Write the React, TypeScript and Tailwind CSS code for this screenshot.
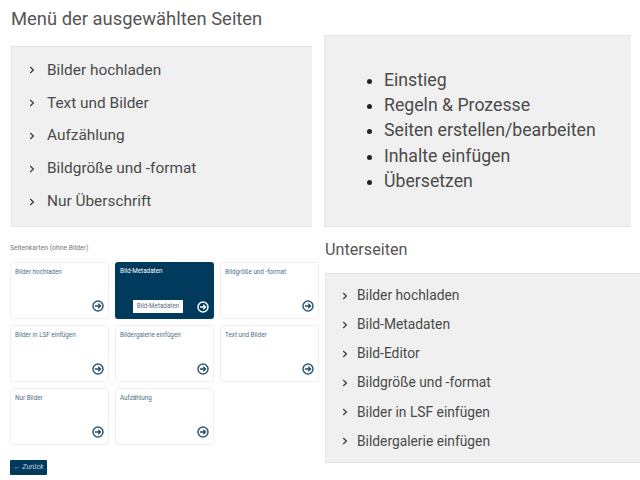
import React from 'react';

const selectedPages = ['Bilder hochladen', 'Text und Bilder', 'Aufzählung', 'Bildgröße und -format', 'Nur Überschrift'];
const topics = ['Einstieg', 'Regeln & Prozesse', 'Seiten erstellen/bearbeiten', 'Inhalte einfügen', 'Übersetzen'];
const subPages = ['Bilder hochladen', 'Bild-Metadaten', 'Bild-Editor', 'Bildgröße und -format', 'Bilder in LSF einfügen', 'Bildergalerie einfügen'];
const cards = ['Bilder hochladen', 'Bild-Metadaten', 'Bildgröße und -format', 'Bilder in LSF einfügen', 'Bildergalerie einfügen', 'Text und Bilder', 'Nur Bilder', 'Aufzählung'];

const Chevron = () => (
  <svg width="6" height="8" viewBox="0 0 6 8" fill="none" className="shrink-0">
    <path d="M1.2 1 L4.4 4 L1.2 7" stroke="#3f3f46" strokeWidth="1.3" />
  </svg>
);

const ArrowCircle = ({ active }: { active: boolean }) => (
  <svg width="12" height="12" viewBox="0 0 12 12" fill="none" className="shrink-0">
    <circle cx="6" cy="6" r="5" stroke={active ? '#ffffff' : '#2f5a78'} strokeWidth="1.5" fill={active ? '#003a5d' : '#ffffff'} />
    <path d="M3 6 H8.5 M6.2 3.6 L8.6 6 L6.2 8.4" stroke={active ? '#ffffff' : '#24485f'} strokeWidth="1.3" />
  </svg>
);

const LinkList = ({ items, rowClass, textClass, gapClass }: { items: string[]; rowClass: string; textClass: string; gapClass: string }) => (
  <ul>
    {items.map((item) => (
      <li key={item} className={`flex items-center ${rowClass} ${gapClass}`}>
        <Chevron />
        <span className={textClass}>{item}</span>
      </li>
    ))}
  </ul>
);

export default function App() {
  return (
    <div className="flex h-[480px] w-[640px] overflow-hidden bg-white font-['Roboto',sans-serif] text-[#4a4a4a]">
      <div className="w-[324px] shrink-0">
        <h2 className="ml-[11px] mt-[8px] text-[18.4px] leading-[22px] text-[#555555]">Menü der ausgewählten Seiten</h2>
        <div className="ml-[11px] mt-[16px] h-[181px] w-[301px] border border-r-0 border-[#e3e3ea] bg-[#f0f0f0] pl-[17px] pt-[7px]">
          <LinkList items={selectedPages} rowClass="h-[32.8px]" textClass="text-[15.4px]" gapClass="gap-[12px]" />
        </div>
        <p className="ml-[10px] mt-[17px] text-[6.8px] leading-[8px] text-[#777777]">Seitenkarten (ohne Bilder)</p>
        <div className="ml-[10px] mt-[10px] grid w-[309px] grid-cols-[99px_99px_99px] gap-[6px]">
          {cards.map((card, i) => {
            const active = i === 1;
            return (
              <div
                key={card}
                className={`flex h-[57px] flex-col rounded-[3px] pt-[5px] ${active ? 'bg-[#003a5d] pl-[5px] pr-[5px] text-white' : 'border border-[#f0f0f0] bg-white pl-[4px] pr-[4px] text-[#4f6f84]'}`}
              >
                <span className="text-[6.3px] leading-[9px]">{card}</span>
                <div className="mt-auto mb-[6px] flex items-center justify-end">
                  {active && <span className="mr-[14px] flex h-[13px] w-[50px] items-center justify-center bg-white text-[6.3px] text-[#5d6f7c]">Bild-Metadaten</span>}
                  <ArrowCircle active={active} />
                </div>
              </div>
            );
          })}
        </div>
        <button className="ml-[10px] mt-[15px] flex h-[15px] w-[37px] items-center justify-center rounded-[1px] bg-[#003a5d] text-[7.2px] italic text-[#c5d3dd]">← Zurück</button>
      </div>
      <div className="flex-1">
        <div className="mt-[35px] h-[192px] w-[307px] border border-r-0 border-[#e3e3ea] bg-[#f0f0f0] pl-[59px] pt-[32px]">
          <ul className="list-disc pl-0 text-[17.7px] leading-[25.2px] text-[#4a4a4a] marker:text-[#222222]">
            {topics.map((t) => (
              <li key={t}>{t}</li>
            ))}
          </ul>
        </div>
        <h2 className="ml-[1px] mt-[12px] text-[16.2px] leading-[21px] text-[#555555]">Unterseiten</h2>
        <div className="ml-[1px] mt-[13px] h-[190px] w-[315px] border border-r-0 border-[#e3e3ea] bg-[#f0f0f0] pl-[16px] pt-[7px]">
          <LinkList items={subPages} rowClass="h-[29.1px]" textClass="text-[13.8px]" gapClass="gap-[9px]" />
        </div>
      </div>
    </div>
  );
}
